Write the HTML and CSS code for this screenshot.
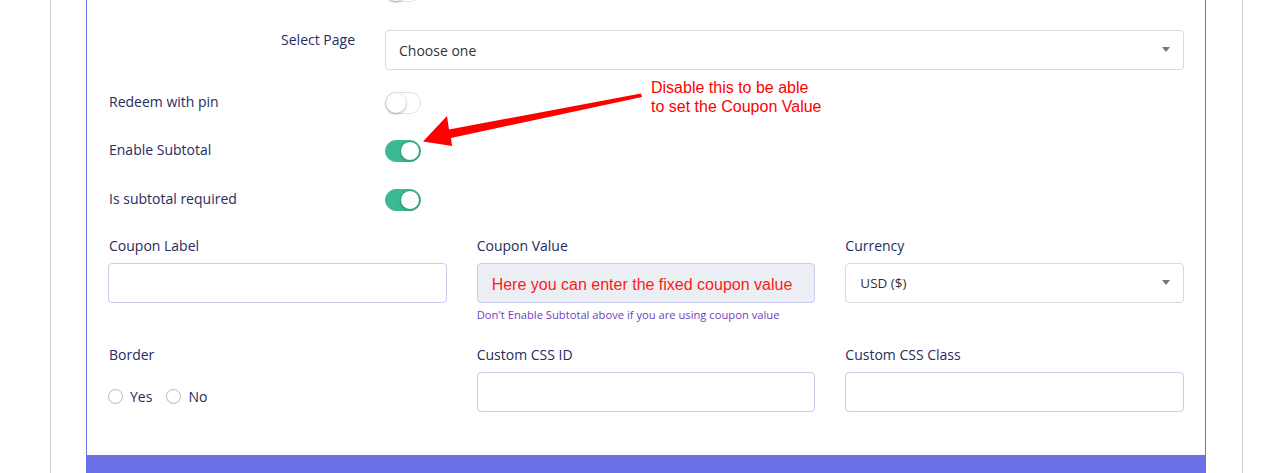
FILE: index.html
```html
<!DOCTYPE html>
<html lang="en">
<head>
<meta charset="utf-8">
<title>Coupon settings</title>
<link rel="stylesheet" href="styles.css">
</head>
<body>
<div class="page">
  <div class="panel">
    <div class="form">
      <div class="row row-first">
        <div class="label"></div>
        <span class="toggle"><span class="knob"></span></span>
      </div>
      <div class="row row-select">
        <div class="label label-right">Select Page</div>
        <div class="select"><span>Choose one</span><span class="caret"></span></div>
      </div>
      <div class="row row-redeem">
        <div class="label">Redeem with pin</div>
        <span class="toggle"><span class="knob"></span></span>
      </div>
      <div class="row row-toggle">
        <div class="label">Enable Subtotal</div>
        <span class="toggle on"><span class="knob"></span></span>
      </div>
      <div class="row row-toggle">
        <div class="label">Is subtotal required</div>
        <span class="toggle on"><span class="knob"></span></span>
      </div>

      <div class="grid">
        <div class="field">
          <div class="flabel first">Coupon Label</div>
          <div class="input"></div>
        </div>
        <div class="field">
          <div class="flabel">Coupon Value</div>
          <div class="input input-disabled">Here you can enter the fixed coupon value</div>
          <div class="hint">Don't Enable Subtotal above if you are using coupon value</div>
        </div>
        <div class="field">
          <div class="flabel">Currency</div>
          <div class="select select-sm"><span>USD ($)</span><span class="caret"></span></div>
        </div>

        <div class="field">
          <div class="flabel first">Border</div>
          <div class="radios">
            <label class="radio"><span class="circle"></span>Yes</label>
            <label class="radio"><span class="circle"></span>No</label>
          </div>
        </div>
        <div class="field">
          <div class="flabel">Custom CSS ID</div>
          <div class="input"></div>
        </div>
        <div class="field">
          <div class="flabel">Custom CSS Class</div>
          <div class="input"></div>
        </div>
      </div>
    </div>
    <div class="bar"></div>

    <div class="note">Disable this to be able<br>to set the Coupon Value</div>
    <svg class="arrow" width="230" height="70" viewBox="420 90 230 70">
      <polygon points="641,93.5 449,129.5 447,116 423,141.5 452,146 451,138 642,97" fill="#ff0000"/>
    </svg>
  </div>
</div>
</body>
</html>
```

FILE: styles.css
```css
* { box-sizing: border-box; }

html, body {
  margin: 0;
  padding: 0;
  background: #ffffff;
}

body {
  font-family: "Open Sans", "Noto Sans", sans-serif;
  font-size: 14px;
  color: #262c5e;
}

.page {
  margin-left: 50px;
  width: 1193px;
  height: 473px;
  border-left: 1px solid #cfcfcf;
  border-right: 1px solid #cfcfcf;
  padding: 0 36px 0 35px;
  overflow: hidden;
}

.panel {
  position: relative;
  width: 1120px;
  margin-top: -20px;
}

.form {
  border-left: 1px solid #6b72e8;
  border-right: 1px solid #6b72e8;
  padding: 0 21px 43px 22px;
}

.row {
  display: grid;
  grid-template-columns: 246px 1fr;
  column-gap: 30px;
  align-items: center;
}

.row-first { height: 22px; }
.row-select { margin-top: 28px; align-items: start; }
.row-redeem { margin-top: 21.5px; }
.row-toggle { margin-top: 26.5px; }

.label {
  line-height: 20px;
  margin-top: -2px;
}
.row-select .label { margin-top: 0; }
.label-right { text-align: right; }

.select {
  height: 40px;
  border: 1px solid #d9d9d9;
  border-radius: 4px;
  background: #fff;
  display: flex;
  align-items: center;
  justify-content: space-between;
  padding: 0 13px 0 13px;
  color: #333;
  font-size: 14px;
}
.select-sm { padding-left: 14px; font-size: 13.5px; }

.caret {
  width: 0;
  height: 0;
  border-left: 4px solid transparent;
  border-right: 4px solid transparent;
  border-top: 5px solid #777;
  margin-top: -1px;
}

.toggle {
  position: relative;
  display: block;
  width: 36px;
  height: 22px;
  border-radius: 11px;
  border: 1px solid #e3e3e3;
  background: #fff;
}
.toggle .knob {
  position: absolute;
  top: 0;
  left: 0;
  width: 20px;
  height: 20px;
  border-radius: 50%;
  background: #fff;
  box-shadow: 0 1px 3px rgba(0,0,0,0.35);
}
.toggle.on {
  background: #3bb994;
  border-color: #3bb994;
}
.toggle.on .knob {
  left: auto;
  right: 0;
  border: 1.5px solid #2a9a77;
  box-shadow: 0 1px 2px rgba(0,0,0,0.2);
}

.grid {
  margin-top: 25.5px;
  display: grid;
  grid-template-columns: repeat(3, 1fr);
  column-gap: 30px;
  row-gap: 22.5px;
  margin-left: -1px;
}

.flabel {
  line-height: 20px;
  margin-bottom: 7px;
}
.flabel.first { padding-left: 1px; }

.input {
  height: 40px;
  border: 1px solid #c9cbec;
  border-radius: 4px;
  background: #fff;
}

.input-disabled {
  background: #ebeef2;
  display: flex;
  align-items: center;
  padding: 3px 0 0 14px;
  font-family: "Liberation Sans", Arial, sans-serif;
  font-size: 16px;
  color: #ff1a1a;
}

.hint {
  margin-top: 4px;
  font-size: 11.2px;
  line-height: 15px;
  color: #6f42c1;
}

.radios {
  display: flex;
  gap: 14px;
  margin-top: 22px;
}
.radio {
  display: flex;
  align-items: center;
  gap: 7px;
  line-height: 20px;
}
.circle {
  width: 15px;
  height: 15px;
  border-radius: 50%;
  border: 1px solid #b4b4b4;
  background: #fff;
}

.bar {
  height: 40px;
  background: #6a71e6;
}

.note {
  position: absolute;
  left: 565px;
  top: 98px;
  font-family: "Liberation Sans", Arial, sans-serif;
  font-size: 16px;
  line-height: 19px;
  color: #ff0000;
}

.arrow {
  position: absolute;
  left: 334px;
  top: 110px;
}
```
